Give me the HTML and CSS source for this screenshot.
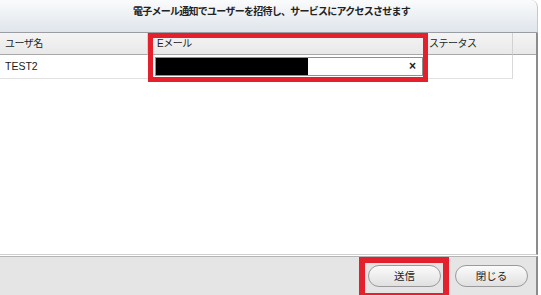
FILE: index.html
```html
<!DOCTYPE html>
<html lang="ja">
<head>
<meta charset="utf-8">
<link rel="stylesheet" href="styles.css">
</head>
<body>
<div class="dialog">
  <div class="titlebar">電子メール通知でユーザーを招待し、サービスにアクセスさせます</div>
  <div class="main">
    <div class="grid">
      <div class="th">ユーザ名</div>
      <div class="th th-email">Eメール</div>
      <div class="th th-status">ステータス</div>
      <div class="th th-last"></div>
      <div class="td">TEST2</div>
      <div class="td td-input">
        <div class="input">
          <span class="redact"></span>
          <span class="clear">×</span>
        </div>
      </div>
      <div class="td td-status"></div>
      <div class="td td-last"></div>
    </div>
  </div>
  <div class="footer">
    <button class="btn">送信</button>
    <button class="btn">閉じる</button>
  </div>
  <div class="mark mark-email"></div>
  <div class="mark mark-send"></div>
</div>
</body>
</html>
```
FILE: styles.css
```css
* { box-sizing: border-box; }
html, body { margin: 0; padding: 0; }
body {
  width: 541px;
  height: 295px;
  overflow: hidden;
  background: #ffffff;
  font-family: "Liberation Sans", "Noto Sans CJK JP", sans-serif;
  color: #1a1a1a;
}
.dialog {
  position: relative;
  width: 538px;
  height: 295px;
  display: flex;
  flex-direction: column;
  background: #ffffff;
}
.titlebar {
  height: 33px;
  flex: none;
  border-bottom: 1px solid #9a9ea3;
  border-right: 1px solid #c4c8cc;
  border-top-right-radius: 7px;
  background: linear-gradient(#fafbfc, #dfe5eb);
  font-size: 10px;
  font-weight: bold;
  letter-spacing: -0.75px;
  text-align: center;
  line-height: 24px;
  padding-left: 6px;
  color: #222;
}
.main {
  height: 222px;
  flex: none;
  border-bottom: 1px solid #cfcfcf;
  border-right: 2px solid #8c8c8c;
}
.grid {
  display: grid;
  grid-template-columns: 148px 280px 85px 1fr;
  grid-template-rows: 22px 24px;
}
.th {
  background: linear-gradient(#f4f4f4, #e9e9e9);
  border-bottom: 1px solid #a9a9a9;
  border-right: 1px solid #d2d2d2;
  font-size: 10px;
  letter-spacing: -0.5px;
  line-height: 22px;
  padding-left: 5px;
  color: #222;
}
.th-email { padding-left: 9px; }
.th-status { padding-left: 1px; }
.th-last { border-right: none; }
.td {
  border-bottom: 1px solid #e2e2e2;
  font-size: 10.5px;
  line-height: 23px;
  padding-left: 5px;
}
.td-status { border-right: 1px solid #dadada; }
.td-last { border-bottom: none; }
.td-input { padding: 2px 5px 0 7px; }
.input {
  height: 19px;
  border: 1px solid #8f8f8f;
  background: #fff;
  display: flex;
  align-items: center;
  justify-content: space-between;
}
.redact {
  width: 152px;
  height: 17px;
  background: #000;
}
.clear {
  font-size: 12px;
  font-weight: bold;
  margin-right: 6px;
  color: #222;
}
.footer {
  flex: 1;
  margin-top: 1px;
  border-top: 1px solid #b5b5b5;
  border-right: 2px solid #8c8c8c;
  background: #e5e5e5;
  display: flex;
  justify-content: flex-end;
  align-items: flex-start;
  gap: 14px;
  padding: 8px 8px 0 0;
}
.btn {
  width: 73px;
  height: 22px;
  border: 1px solid #9a9a9a;
  border-radius: 11px;
  background: linear-gradient(#fbfbfb, #e0e0e0);
  font-family: "Noto Sans CJK JP", sans-serif;
  font-size: 10.5px;
  color: #222;
  padding: 0;
  line-height: 20px;
}
.mark {
  position: absolute;
  border-style: solid;
  border-color: #e3202b;
}
.mark-email {
  left: 148px;
  top: 33px;
  width: 280px;
  height: 49px;
  border-width: 5px;
}
.mark-send {
  left: 359px;
  top: 257px;
  width: 90px;
  height: 42px;
  border-width: 6px;
}
```
